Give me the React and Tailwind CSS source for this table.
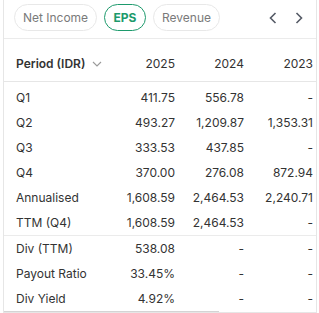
import React from "react";

const rows = [
  ["Q1", "411.75", "556.78", "-"],
  ["Q2", "493.27", "1,209.87", "1,353.31"],
  ["Q3", "333.53", "437.85", "-"],
  ["Q4", "370.00", "276.08", "872.94"],
  ["Annualised", "1,608.59", "2,464.53", "2,240.71"],
  ["TTM (Q4)", "1,608.59", "2,464.53", "-"],
];

const divRows = [
  ["Div (TTM)", "538.08", "-", "-"],
  ["Payout Ratio", "33.45%", "-", "-"],
  ["Div Yield", "4.92%", "-", "-"],
];

const Row = ({ cells }) => (
  <div className="grid grid-cols-[90px_69px_69px_69px] h-[25px] items-center pl-[12px]">
    <span className="whitespace-nowrap">{cells[0]}</span>
    <span className="text-right">{cells[1]}</span>
    <span className="text-right">{cells[2]}</span>
    <span className="text-right">{cells[3]}</span>
  </div>
);

export default function App() {
  return (
    <div
      className="w-[319px] h-[313px] bg-white pl-[3px] pr-[2px] text-[12px] text-[#333333]"
      style={{ fontFamily: "Inter, 'Liberation Sans', sans-serif" }}
    >
      <div className="border-x border-[#e6e6e6] h-[313px] flex flex-col">
        {/* tabs */}
        <div className="h-[39px] shrink-0 flex items-center pl-[10px] pr-[12px] pb-[3px] border-b border-[#ebebeb]">
          <div className="flex gap-[7px] items-center">
            <button className="h-[27px] w-[83px] rounded-full border border-[#e8e8e8] text-[#7a7a7a]">
              Net Income
            </button>
            <button className="h-[27px] w-[42px] rounded-full border border-[#1d9a6c] text-[#1d9a6c] font-bold">
              EPS
            </button>
            <button className="h-[27px] w-[67px] rounded-full border border-[#e8e8e8] text-[#7a7a7a]">
              Revenue
            </button>
          </div>
          <div className="ml-auto flex items-center gap-[16px] text-[#555b66]">
            <svg width="10" height="14" viewBox="0 0 10 14" fill="none" stroke="currentColor" strokeWidth="1.6">
              <path d="M7.5 2 L2.5 7 L7.5 12" />
            </svg>
            <svg width="10" height="14" viewBox="0 0 10 14" fill="none" stroke="currentColor" strokeWidth="1.6">
              <path d="M2.5 2 L7.5 7 L2.5 12" />
            </svg>
          </div>
        </div>
        {/* header */}
        <div className="grid grid-cols-[90px_69px_69px_69px] h-[43px] shrink-0 items-end pb-[8px] pl-[12px] border-b border-[#e6e6e6]">
          <span className="font-semibold flex items-center gap-[7px] whitespace-nowrap">
            Period (IDR)
            <svg width="10" height="6" viewBox="0 0 10 6" fill="none" stroke="#9a9a9a" strokeWidth="1.1">
              <path d="M1 1 L5 5 L9 1" />
            </svg>
          </span>
          <span className="text-right">2025</span>
          <span className="text-right">2024</span>
          <span className="text-right">2023</span>
        </div>
        <div className="pt-[3px] shrink-0 border-b border-[#ebebeb]">
          {rows.map((r) => (
            <Row key={r[0]} cells={r} />
          ))}
        </div>
        <div className="flex-1">
          {divRows.map((r) => (
            <Row key={r[0]} cells={r} />
          ))}
        </div>
        <div className="flex shrink-0 border-b border-[#e6e6e6] h-[2px]">
          <div className="h-[1px] w-[215px] bg-[#d4d4d4]" />
        </div>
      </div>
    </div>
  );
}
